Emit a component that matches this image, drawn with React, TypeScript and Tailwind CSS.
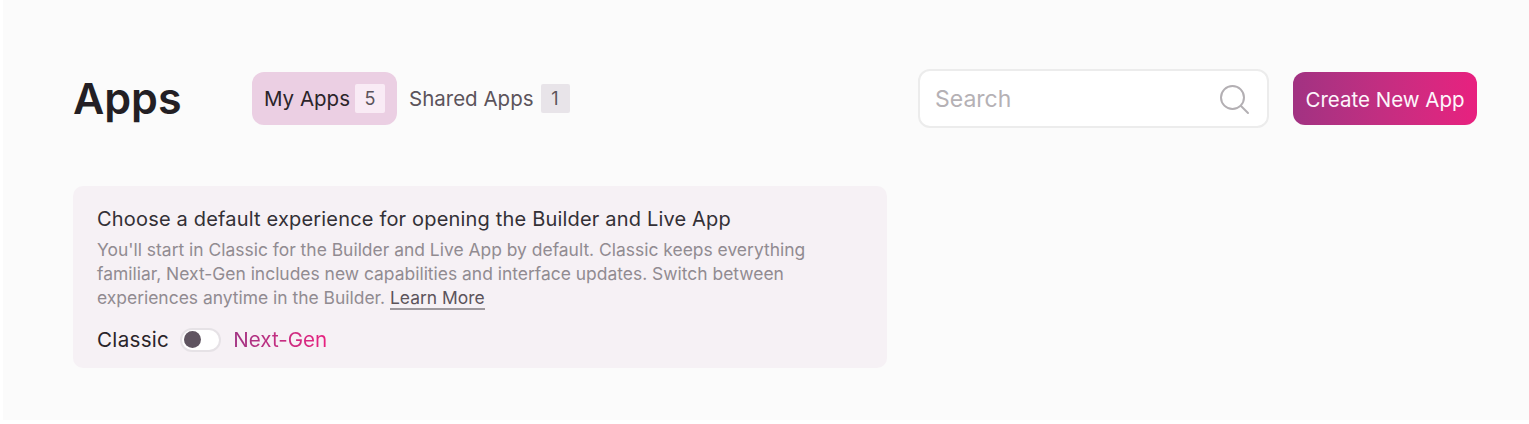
export default function App() {
  return (
    <div className="h-[424px] w-[1529px] overflow-hidden bg-white pl-[3px] pb-[4px] font-['Inter',sans-serif]">
      <div className="h-full bg-[#fbfbfb] pl-[70px] pr-[52px] pt-[69px]">
        <header className="flex h-[59px] items-center">
          <h1 className="w-[179px] text-[43px] font-semibold leading-none text-[#231f24]">Apps</h1>
          <div className="flex items-center">
            <button className="flex h-[53px] w-[145px] items-center rounded-[12px] bg-[#ebcfe3] pl-3 text-[20.5px] text-[#2a2429]">
              <span className="pt-[2px]">My Apps</span>
              <span className="ml-[5px] flex h-[29px] w-[30px] items-center justify-center rounded-[2px] bg-[#f9ebf5] text-[18px] text-[#5c545b]">5</span>
            </button>
            <button className="ml-3 flex items-center text-[20.5px] text-[#5c545b]">
              <span className="pt-[2px]">Shared Apps</span>
              <span className="ml-[7px] flex h-[29px] w-[29px] items-center justify-center rounded-[2px] bg-[#e8e4e9] text-[18px] text-[#5c545b]">1</span>
            </button>
          </div>
          <div className="ml-auto flex h-[59px] w-[351px] items-center justify-between rounded-[12px] border-2 border-[#ececec] bg-white pl-[15px] pr-[17px]">
            <span className="pt-[2px] text-[23px] text-[#b5b1b5]">Search</span>
            <svg width="32" height="32" viewBox="0 0 32 32" fill="none" stroke="#b3afb3" strokeWidth="2" strokeLinecap="round">
              <circle cx="14.5" cy="14.5" r="11.5" />
              <path d="M23 23L30 30" />
            </svg>
          </div>
          <button className="ml-6 h-[53px] w-[184px] rounded-[12px] bg-gradient-to-r from-[#a13282] to-[#e8207f] pt-[3px] text-[20.5px] text-[#fdf6fb]">
            Create New App
          </button>
        </header>
        <section className="mt-[58px] h-[182px] w-[814px] rounded-[10px] bg-[#f6f1f5] pl-6 pt-[21px]">
          <h2 className="text-[20px] leading-[24px] tracking-[0.18px] text-[#333036]">Choose a default experience for opening the Builder and Live App</h2>
          <p className="mt-[7px] w-[740px] text-[17.45px] leading-[24px] text-[#918b91]">
            You'll start in Classic for the Builder and Live App by default. Classic keeps everything familiar, Next-Gen includes new capabilities and interface updates. Switch between experiences anytime in the Builder.{" "}
            <a className="border-b-2 border-[#9d989d] text-[#5c545b]">Learn More</a>
          </p>
          <div className="mt-[17px] flex items-center text-[20.6px] leading-[24px]">
            <span className="pt-[1px] tracking-[0.3px] text-[#2a2429]">Classic</span>
            <span className="ml-[11px] flex h-[24px] w-[41px] items-center rounded-full border-2 border-[#e6e2e6] bg-white pl-[2px]">
              <span className="h-[17px] w-[17px] rounded-full bg-[#5f5460]" />
            </span>
            <span className="ml-3 bg-gradient-to-r from-[#a13282] to-[#e8207f] bg-clip-text pt-[1px] text-transparent">Next-Gen</span>
          </div>
        </section>
      </div>
    </div>
  );
}
